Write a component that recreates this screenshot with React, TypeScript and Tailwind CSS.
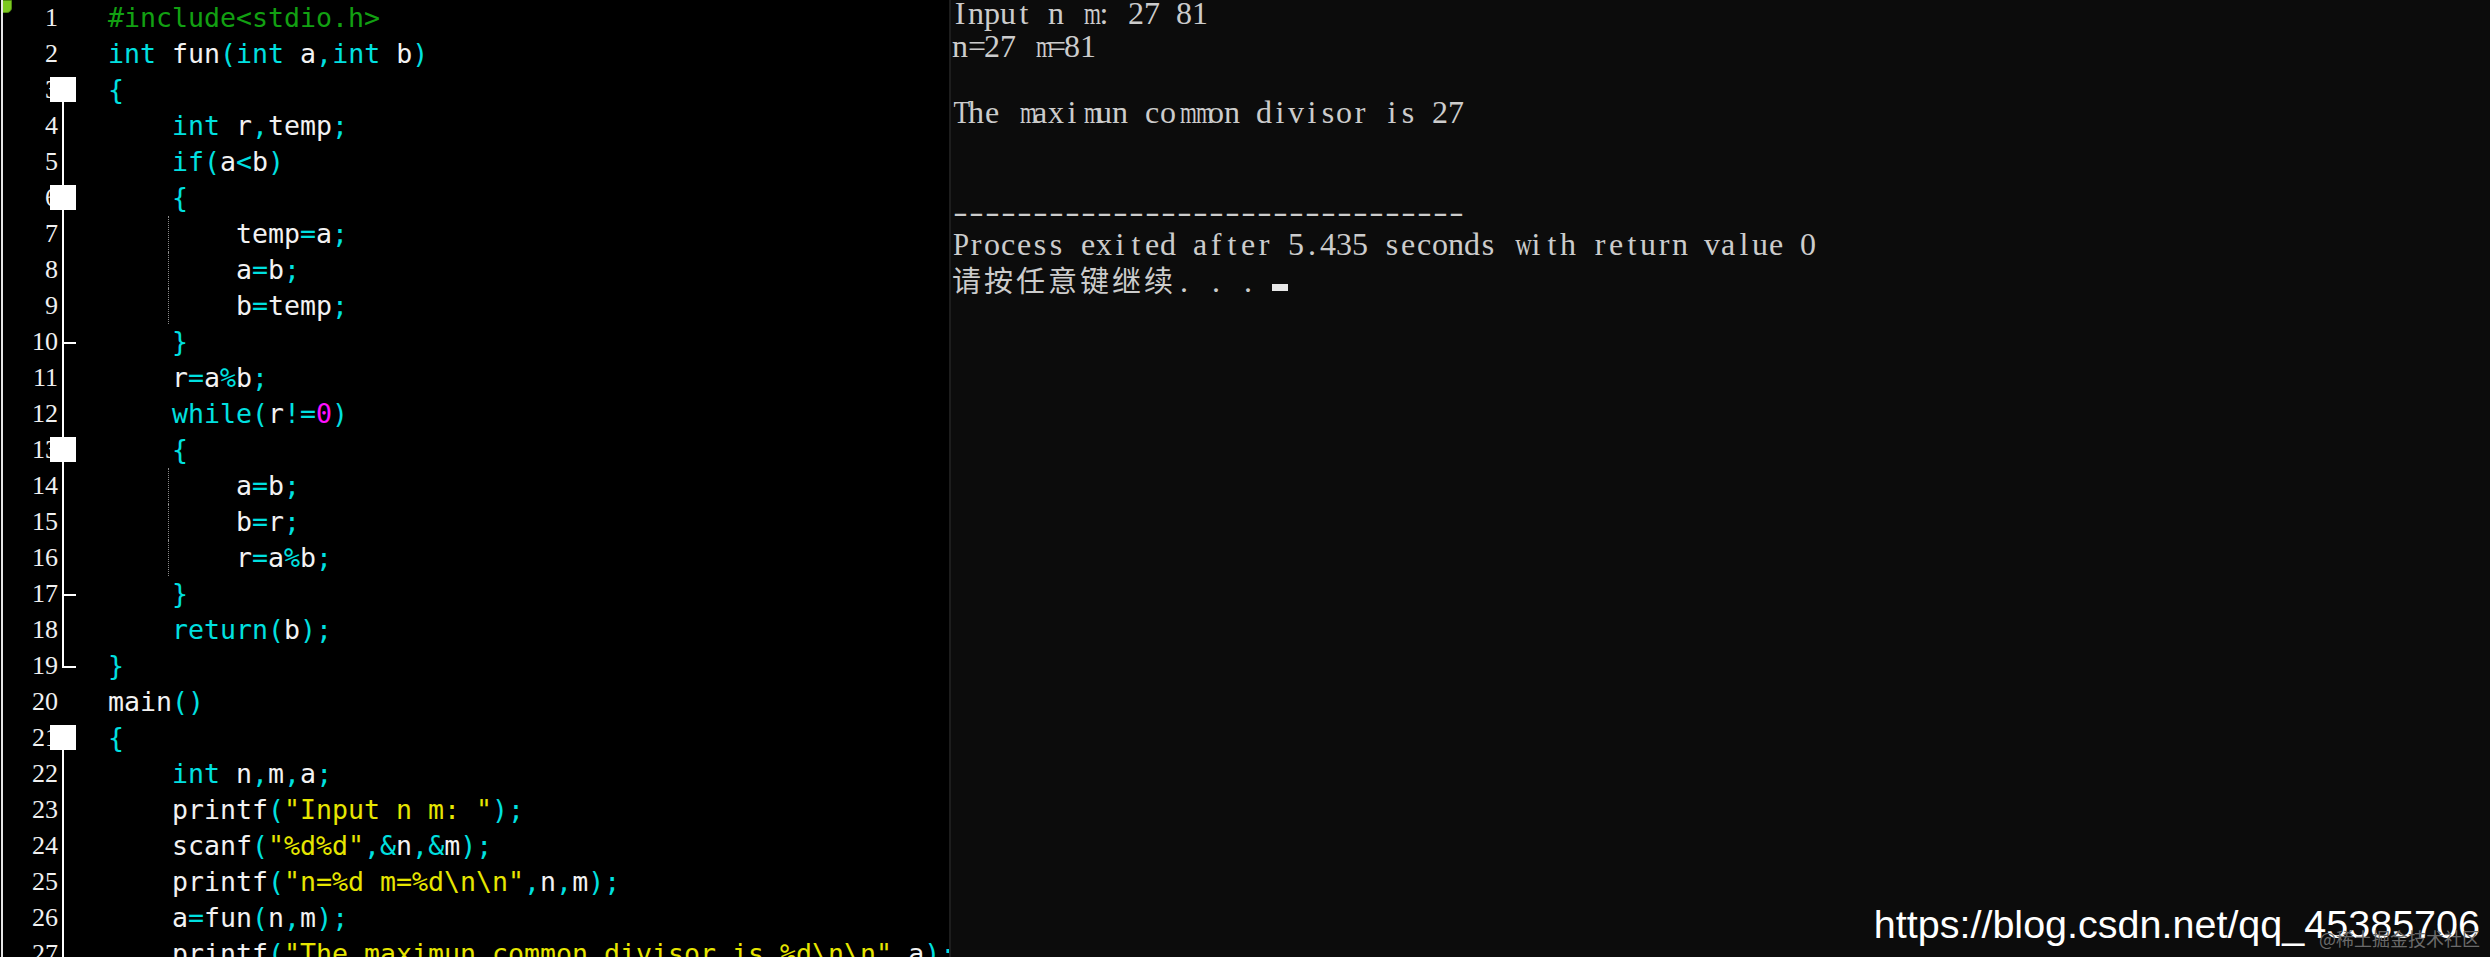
import React from "react";

type Tok = { t: string; c: string };
const KW = new Set(["int", "if", "while", "return"]);

const COLORS: Record<string, string> = {
  pp: "text-[#12a012]",
  kw: "text-[#00e0e0]",
  id: "text-[#f2f2f2]",
  str: "text-[#e6e600]",
  num: "text-[#ff10ff]",
  op: "text-[#00e0e0]",
};

function tokenize(line: string): Tok[] {
  if (line.trimStart().startsWith("#")) return [{ t: line, c: "pp" }];
  const out: Tok[] = [];
  let i = 0;
  while (i < line.length) {
    const ch = line[i];
    if (ch === " ") {
      let j = i;
      while (j < line.length && line[j] === " ") j++;
      out.push({ t: line.slice(i, j), c: "id" });
      i = j;
    } else if (ch === '"') {
      let j = i + 1;
      while (j < line.length && line[j] !== '"') j++;
      j++;
      out.push({ t: line.slice(i, j), c: "str" });
      i = j;
    } else if (/[A-Za-z_]/.test(ch)) {
      let j = i;
      while (j < line.length && /[A-Za-z0-9_]/.test(line[j])) j++;
      const w = line.slice(i, j);
      out.push({ t: w, c: KW.has(w) ? "kw" : "id" });
      i = j;
    } else if (/[0-9]/.test(ch)) {
      let j = i;
      while (j < line.length && /[0-9]/.test(line[j])) j++;
      out.push({ t: line.slice(i, j), c: "num" });
      i = j;
    } else {
      out.push({ t: ch, c: "op" });
      i++;
    }
  }
  return out;
}

const CODE: string[] = [
  "#include<stdio.h>",
  "int fun(int a,int b)",
  "{",
  "    int r,temp;",
  "    if(a<b)",
  "    {",
  "        temp=a;",
  "        a=b;",
  "        b=temp;",
  "    }",
  "    r=a%b;",
  "    while(r!=0)",
  "    {",
  "        a=b;",
  "        b=r;",
  "        r=a%b;",
  "    }",
  "    return(b);",
  "}",
  "main()",
  "{",
  "    int n,m,a;",
  '    printf("Input n m: ");',
  '    scanf("%d%d",&n,&m);',
  '    printf("n=%d m=%d\\n\\n",n,m);',
  "    a=fun(n,m);",
  '    printf("The maximun common divisor is %d\\n\\n",a);',
];

type FoldKind = "none" | "start" | "startInner" | "line" | "tick" | "end";

function foldFor(n: number): FoldKind {
  if (n === 3 || n === 21) return "start";
  if (n === 6 || n === 13) return "startInner";
  if (n === 10 || n === 17) return "tick";
  if (n === 19) return "end";
  if ((n >= 4 && n <= 18) || n >= 22) return "line";
  return "none";
}

const GUIDES = new Set([7, 8, 9, 14, 15, 16]);

function Fold({ kind }: { kind: FoldKind }) {
  return (
    <div className="relative w-[50px] h-[36px] shrink-0">
      {kind === "line" || kind === "startInner" || kind === "tick" ? (
        <span className="absolute left-[4px] top-0 bottom-0 w-[2px] bg-white" />
      ) : null}
      {kind === "start" ? (
        <span className="absolute left-[4px] top-[18px] bottom-0 w-[2px] bg-white" />
      ) : null}
      {kind === "end" ? (
        <span className="absolute left-[4px] top-0 h-[20px] w-[2px] bg-white" />
      ) : null}
      {kind === "tick" || kind === "end" ? (
        <span className="absolute left-[4px] top-[18px] h-[2px] w-[14px] bg-white" />
      ) : null}
      {kind === "start" || kind === "startInner" ? (
        <span className="absolute left-[-8px] top-[5px] w-[26px] h-[25px] bg-white" />
      ) : null}
    </div>
  );
}

function CodeRow({ n, text }: { n: number; text: string }) {
  const toks = tokenize(text);
  return (
    <div className="flex h-[36px] shrink-0">
      <div className="w-[55px] shrink-0 text-right font-['Liberation_Serif',serif] text-[26px] leading-[36px] text-[#f0f0f0]">
        {n}
      </div>
      <Fold kind={foldFor(n)} />
      <div className="relative flex-1 whitespace-pre font-['DejaVu_Sans_Mono',monospace] text-[26.58px] leading-[36px]">
        {GUIDES.has(n) ? (
          <span className="absolute left-[60px] top-0 bottom-0 border-l border-dotted border-[#8a8a8a]" />
        ) : null}
        {toks.map((tk, i) => (
          <span key={i} className={COLORS[tk.c]}>
            {tk.t}
          </span>
        ))}
      </div>
    </div>
  );
}

const SQUEEZE: Record<string, string> = {
  m: "scale-x-[0.68]",
  w: "scale-x-[0.72]",
  M: "scale-x-[0.6]",
  W: "scale-x-[0.55]",
  T: "scale-x-[0.85]",
  P: "scale-x-[0.9]",
  "-": "scale-x-[1.35]",
};

function ConsoleLine({ text }: { text: string }) {
  return (
    <div className="flex h-[33px] leading-[33px] whitespace-pre">
      {Array.from(text).map((ch, i) => (
        <span key={i} className="inline-block w-[16px] text-center">
          {SQUEEZE[ch] ? (
            <span className={"inline-block " + SQUEEZE[ch]}>{ch}</span>
          ) : (
            ch
          )}
        </span>
      ))}
    </div>
  );
}

const CONSOLE: string[] = [
  "Input n m: 27 81",
  "n=27 m=81",
  "",
  "The maximun common divisor is 27",
  "",
  "",
  "--------------------------------",
  "Process exited after 5.435 seconds with return value 0",
];

export default function App() {
  return (
    <div className="w-[2490px] h-[957px] flex overflow-hidden bg-black">
      <div className="relative w-[948px] ml-[1px] h-full shrink-0 overflow-hidden border-l-2 border-[#e6e6e6] bg-black flex flex-col">
        {CODE.map((line, i) => (
          <CodeRow key={i} n={i + 1} text={line} />
        ))}
        <span className="absolute left-[-2px] top-0 w-[11px] h-[13px] rounded-br-[5px] bg-[#7cc820] border border-[#4f8a10]" />
      </div>
      <div className="relative flex-1 h-full bg-[#0c0c0c] border-l-2 border-[#1d1d1d] pl-[1px]">
        <div className="flex flex-col -mt-[3px] font-['Liberation_Serif',serif] text-[32px] text-[#cccccc]">
          {CONSOLE.map((l, i) => (
            <ConsoleLine key={i} text={l} />
          ))}
          <div className="flex items-baseline h-[33px] leading-[33px] whitespace-pre">
            <span className="font-['Noto_Sans_CJK_SC',sans-serif] text-[29px] tracking-[3px] leading-[33px] mt-[2px]">
              请按任意键继续
            </span>
            <ConsoleDots />
            <span className="inline-block self-end mb-[3px] w-[16px] h-[7px] bg-[#e8e8e8]" />
          </div>
        </div>
        <div className="absolute right-[10px] top-[905px] font-['Liberation_Sans',Arial,sans-serif] text-[39.5px] leading-none text-white whitespace-nowrap">
          https://blog.csdn.net/qq_45385706
        </div>
        <div className="absolute right-[10px] top-[929px] font-['Noto_Sans_CJK_SC',sans-serif] text-[18px] leading-none text-[#6a6a6a] whitespace-nowrap">
          @稀土掘金技术社区
        </div>
      </div>
    </div>
  );
}

function ConsoleDots() {
  return (
    <span className="flex">
      {Array.from(". . . ").map((ch, i) => (
        <span key={i} className="inline-block w-[16px] text-center">
          {ch}
        </span>
      ))}
    </span>
  );
}
